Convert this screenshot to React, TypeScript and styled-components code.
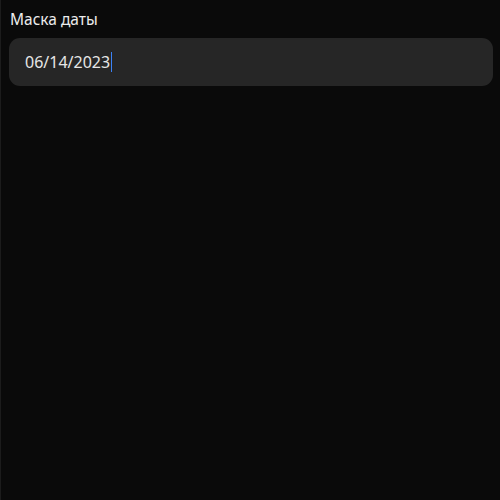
import React from "react";
import styled, { createGlobalStyle } from "styled-components";

const Global = createGlobalStyle`
  html, body { margin: 0; padding: 0; background: #0a0a0a; }
  body { font-family: "Noto Sans", sans-serif; }
`;

const Page = styled.div`
  min-height: 500px;
  box-sizing: border-box;
  border-left: 1px solid #1c1c1c;
  padding: 8px 7px 0 8px;
  display: flex;
  flex-direction: column;
  gap: 8px;
`;

const Label = styled.div`
  font-size: 15.5px;
  line-height: 22px;
  color: #ececec;
  padding-left: 1px;
`;

const Field = styled.div`
  box-sizing: border-box;
  height: 48px;
  border-radius: 11px;
  background: #262626;
  color: #e6e6e6;
  font-size: 16px;
  padding: 0 16px;
  display: flex;
  align-items: center;
`;

const Caret = styled.span`
  display: inline-block;
  width: 1px;
  height: 20px;
  background: #3b82f6;
  margin-left: 1px;
`;

export default function App() {
  return (
    <>
      <Global />
      <Page>
        <Label>Маска даты</Label>
        <Field role="textbox">
          <span>06/14/2023</span>
          <Caret />
        </Field>
      </Page>
    </>
  );
}
